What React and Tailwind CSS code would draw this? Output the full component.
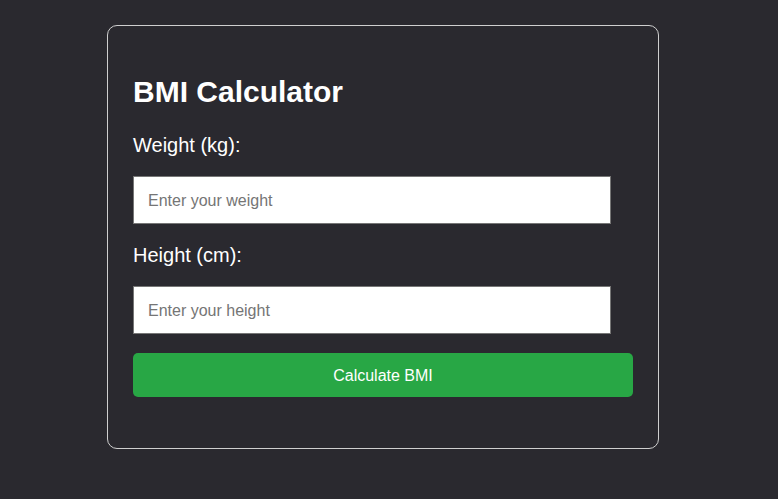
export default function App() {
  return (
    <div className="min-h-[499px] w-full bg-[#2a292f] flex justify-center pt-[25px]" style={{ fontFamily: '"Liberation Sans", Arial, sans-serif' }}>
      <div className="w-[552px] h-[424px] ml-[-12px] border border-[#cfcfcf] rounded-[10px] px-[25px] pt-[48px] pb-[50px] flex flex-col">
        <h1 className="text-[30px] leading-[36px] font-bold text-white">BMI Calculator</h1>
        <label className="mt-[23px] text-[20px] leading-[24px] text-white">Weight (kg):</label>
        <input
          type="number"
          placeholder="Enter your weight"
          className="mt-[19px] w-[478px] h-[48px] bg-white border border-[#767676] px-[14px] pt-[2px] text-[16px] text-black placeholder:text-[#757575] outline-none"
        />
        <label className="mt-[19px] text-[20px] leading-[24px] text-white">Height (cm):</label>
        <input
          type="number"
          placeholder="Enter your height"
          className="mt-[19px] w-[478px] h-[48px] bg-white border border-[#767676] px-[14px] pt-[2px] text-[16px] text-black placeholder:text-[#757575] outline-none"
        />
        <button className="mt-[19px] w-[500px] h-[44px] rounded-[5px] bg-[#28a745] text-white text-[16px] pt-[2px]">
          Calculate BMI
        </button>
      </div>
    </div>
  );
}
